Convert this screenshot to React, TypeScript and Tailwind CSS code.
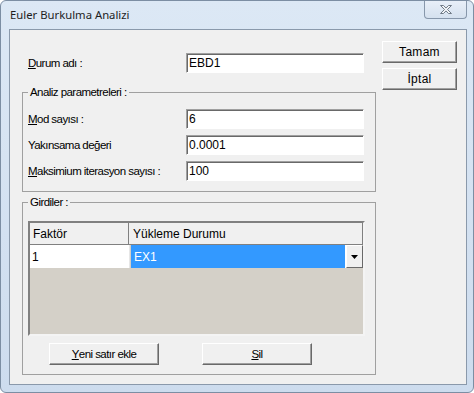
import React from 'react';

const ui = "font-['Liberation_Sans',sans-serif] text-[11.5px] tracking-[-0.55px] leading-[14px] text-black";

function Field({ value }: { value: string }) {
  return (
    <div className="h-[20px] w-[178px] bg-white border border-t-[#a0a0a0] border-l-[#a0a0a0] border-r-white border-b-white shadow-[inset_1px_1px_0_#696969] pl-[2px] flex items-center text-[12px] tracking-normal">
      {value}
    </div>
  );
}

function Btn({ children, w = 'w-[75px]', wide = false }: { children: React.ReactNode; w?: string; wide?: boolean }) {
  return (
    <div className={`${w} h-[22px] bg-[#f0f0f0] border border-t-white border-l-white border-r-[#696969] border-b-[#696969] shadow-[inset_-1px_-1px_0_#a0a0a0] flex items-center justify-center ${wide ? 'text-[12px] tracking-[0.3px]' : ''}`}>
      {children}
    </div>
  );
}

function Row({ label, value }: { label: React.ReactNode; value: string }) {
  return (
    <div className="flex items-center h-[20px]">
      <div className="w-[163px] pl-[5px]">{label}</div>
      <Field value={value} />
    </div>
  );
}

export default function App() {
  return (
    <div className="w-[474px] h-[393px] bg-white">
      <div className="w-[474px] h-[393px] rounded-[6px] border border-[#7c8ea3] bg-gradient-to-b from-[#dce8f5] to-[#cddcee] flex flex-col">
        {/* title bar */}
        <div className="h-[28px] flex items-start justify-between shrink-0">
          <div className="pl-[9px] pt-[7px] font-['Noto_Sans',sans-serif] text-[11.3px] leading-[14px] text-[#1e1e1e]">Euler Burkulma Analizi</div>
          <div className="mr-[6px] w-[43px] h-[18px] rounded-b-[4px] border border-t-0 border-[#8797ab] bg-gradient-to-b from-[#e8eff8] to-[#d5e1ef] flex items-center justify-center">
            <svg width="14" height="11" viewBox="0 0 14 11">
              <path d="M1.5 1.5h3l2.5 2.6 2.5-2.6h3l-4 4 4 4h-3L7 6.9 4.5 9.5h-3l4-4z" fill="#f4f6f9" stroke="#6f7a86" strokeWidth="1" strokeLinejoin="round" />
            </svg>
          </div>
        </div>

        {/* client area */}
        <div className={`ml-[8px] mr-[6px] h-[356px] border border-[#8a99ab] bg-[#f0f0f0] flex pl-[12px] ${ui}`}>
          <div className="w-[354px] flex flex-col">
            <div className="mt-[23px] flex items-center h-[20px]">
              <div className="w-[164px] pl-[6px]"><span className="underline">D</span>urum adı :</div>
              <Field value="EBD1" />
            </div>

            <fieldset className="mt-[12px] border border-[#a0a0a0] pb-[10px]">
              <legend className="ml-[5px] px-[2px] leading-[14px]">Analiz parametreleri :</legend>
              <div className="mt-[10px] flex flex-col gap-[6px]">
                <Row label={<><span className="underline">M</span>od sayısı :</>} value="6" />
                <Row label="Yakınsama değeri" value="0.0001" />
                <Row label={<><span className="underline">M</span>aksimium iterasyon sayısı :</>} value="100" />
              </div>
            </fieldset>

            <fieldset className="mt-[3px] border border-[#a0a0a0] pb-[9px]">
              <legend className="ml-[5px] px-[2px] leading-[14px]">Girdiler :</legend>
              <div className="ml-[5px] mt-[12px] w-[337px] h-[115px] border-2 border-t-[#808080] border-l-[#808080] border-r-[#f4f4f4] border-b-[#f4f4f4] bg-[#d4d0c8] flex flex-col text-[12px] tracking-normal">
                <div className="h-[22px] flex bg-[#f0f0f0] border-b border-[#808080] shrink-0">
                  <div className="w-[99px] pl-[3px] border-r border-[#808080] flex items-center">Faktör</div>
                  <div className="flex-1 pl-[4px] border-r border-[#808080] flex items-center">Yükleme Durumu</div>
                </div>
                <div className="h-[23px] flex shrink-0">
                  <div className="w-[100px] pl-[2px] bg-white border-r border-[#e6e6e6] flex items-center">1</div>
                  <div className="flex-1 ml-px pl-[3px] bg-[#3399ff] text-white border-r border-white flex items-center">EX1</div>
                  <div className="w-[17px] bg-[#f0f0f0] border border-t-white border-l-white border-r-[#696969] border-b-[#696969] flex items-center justify-center">
                    <svg width="7" height="4" viewBox="0 0 7 4"><path d="M0 0h7L3.5 4z" fill="#000" /></svg>
                  </div>
                </div>
              </div>
              <div className="mt-[7px] ml-[26px] flex gap-[43px]">
                <Btn w="w-[110px]"><span className="underline">Y</span>eni satır ekle</Btn>
                <Btn w="w-[110px]"><span className="underline">S</span>il</Btn>
              </div>
            </fieldset>
          </div>

          <div className="ml-[6px] mt-[11px] flex flex-col gap-[5px]">
            <Btn wide>Tamam</Btn>
            <Btn wide>İptal</Btn>
          </div>
        </div>
      </div>
    </div>
  );
}
